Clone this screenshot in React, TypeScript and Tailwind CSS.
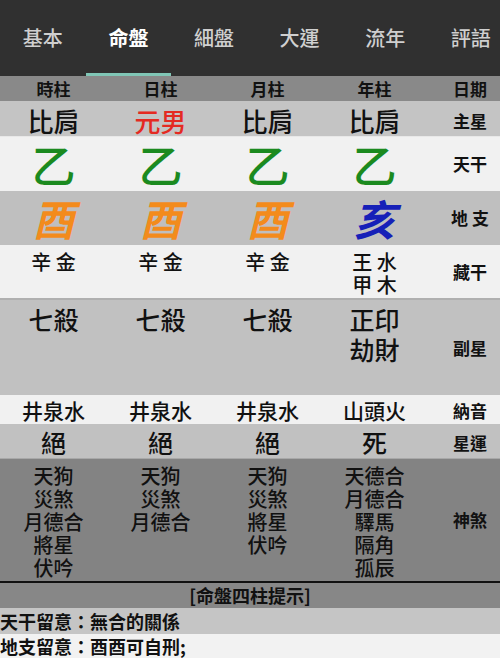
const TABS = ['基本', '命盤', '細盤', '大運', '流年', '評語']

const COLS = 'grid grid-cols-[107px_107px_107px_107px_1fr]'

function Label({ children }: { children: React.ReactNode }) {
  return (
    <div className="flex items-center justify-center pl-3 text-[17px] font-bold not-italic text-[#111] leading-normal">
      {children}
    </div>
  )
}

export default function App() {
  const shensha = [
    ['天狗', '災煞', '月德合', '將星', '伏吟'],
    ['天狗', '災煞', '月德合'],
    ['天狗', '災煞', '將星', '伏吟'],
    ['天德合', '月德合', '驛馬', '隔角', '孤辰'],
  ]

  return (
    <div
      className="w-[500px] h-[658px] overflow-hidden bg-[#f2f2f2] text-[#111]"
      style={{ fontFamily: '"Noto Sans CJK TC", "Noto Sans CJK SC", sans-serif' }}
    >
      {/* Tabs */}
      <div className="h-[76px] bg-[#303030] flex overflow-hidden">
        {TABS.map((t, i) => (
          <div
            key={t}
            className={`relative shrink-0 w-[85.6px] flex items-center justify-center text-[20px] ${
              i === 1 ? 'text-white font-bold' : 'text-[#cfcfcf] font-medium'
            }`}
          >
            <span className="-mt-[1px]">{t}</span>
            {i === 1 && <div className="absolute bottom-0 left-0 right-0 h-[3px] bg-[#80c6b6]" />}
          </div>
        ))}
      </div>

      {/* Column headers */}
      <div className={`${COLS} h-[25px] bg-[#898989] text-[17px] font-bold`}>
        {['時柱', '日柱', '月柱', '年柱'].map((c) => (
          <div key={c} className="flex items-center justify-center">{c}</div>
        ))}
        <Label>日期</Label>
      </div>

      {/* 主星 */}
      <div className={`${COLS} h-[35px] bg-[#c4c4c4] text-[26px] font-medium`}>
        <div className="flex items-center justify-center">比肩</div>
        <div className="flex items-center justify-center text-[#e42a22]">元男</div>
        <div className="flex items-center justify-center">比肩</div>
        <div className="flex items-center justify-center">比肩</div>
        <Label>主星</Label>
      </div>

      {/* 天干 */}
      <div className={`${COLS} h-[55px] bg-[#f1f1f1] text-[44px] font-medium text-[#1b8a1f] border-t border-[#e8e8e8]`}>
        {[0, 1, 2, 3].map((i) => (
          <div key={i} className="flex items-center justify-center leading-none">乙</div>
        ))}
        <Label>天干</Label>
      </div>

      {/* 地支 */}
      <div className={`${COLS} h-[54px] bg-[#bfbfbf] text-[42px] font-bold`}>
        {[0, 1, 2].map((i) => (
          <div key={i} className="flex items-center justify-center leading-none italic text-[#f38b1c]">酉</div>
        ))}
        <div className="flex items-center justify-center leading-none italic text-[#1620b8]">亥</div>
        <Label>地 支</Label>
      </div>

      {/* 藏干 */}
      <div className={`${COLS} h-[53px] bg-[#f1f1f1] text-[20px] font-medium leading-[23px]`}>
        {[0, 1, 2].map((i) => (
          <div key={i} className="pt-[5px] text-center">辛 金</div>
        ))}
        <div className="pt-[5px] text-center">
          <div>王 水</div>
          <div>甲 木</div>
        </div>
        <Label>藏干</Label>
      </div>

      {/* 副星 */}
      <div className={`${COLS} h-[97px] bg-[#c1c1c1] text-[25px] font-medium leading-[30px] border-t-2 border-[#b0b0b0]`}>
        {[0, 1, 2].map((i) => (
          <div key={i} className="pt-[4px] text-center">七殺</div>
        ))}
        <div className="pt-[4px] text-center">
          <div>正印</div>
          <div>劫財</div>
        </div>
        <Label>副星</Label>
      </div>

      {/* 納音 */}
      <div className={`${COLS} h-[29px] bg-[#f1f1f1] text-[21px] font-medium`}>
        {['井泉水', '井泉水', '井泉水', '山頭火'].map((c, i) => (
          <div key={i} className="flex items-center justify-center">{c}</div>
        ))}
        <Label>納音</Label>
      </div>

      {/* 星運 */}
      <div className={`${COLS} h-[34px] bg-[#c1c1c1] text-[25px] font-medium`}>
        {['絕', '絕', '絕', '死'].map((c, i) => (
          <div key={i} className="flex items-center justify-center">{c}</div>
        ))}
        <Label>星運</Label>
      </div>

      {/* 神煞 */}
      <div className={`${COLS} h-[123px] bg-[#838383] text-[20px] font-medium leading-[23px] border-t border-[#a8a8a8]`}>
        {shensha.map((col, i) => (
          <div key={i} className="pt-[5px] text-center">
            {col.map((s, j) => (
              <div key={j}>{s}</div>
            ))}
          </div>
        ))}
        <Label>神煞</Label>
      </div>

      {/* 提示 */}
      <div className="h-[2px] bg-[#111]" />
      <div className="h-[25px] bg-[#878787] flex items-center justify-center text-[18px] font-bold">
        [命盤四柱提示]
      </div>
      <div className="h-[26px] bg-[#c5c5c5] flex items-center text-[18px] font-bold">
        天干留意：無合的關係
      </div>
      <div className="h-[25px] bg-[#f2f2f2] flex items-center text-[18px] font-bold">
        地支留意：酉酉可自刑;
      </div>
    </div>
  )
}
